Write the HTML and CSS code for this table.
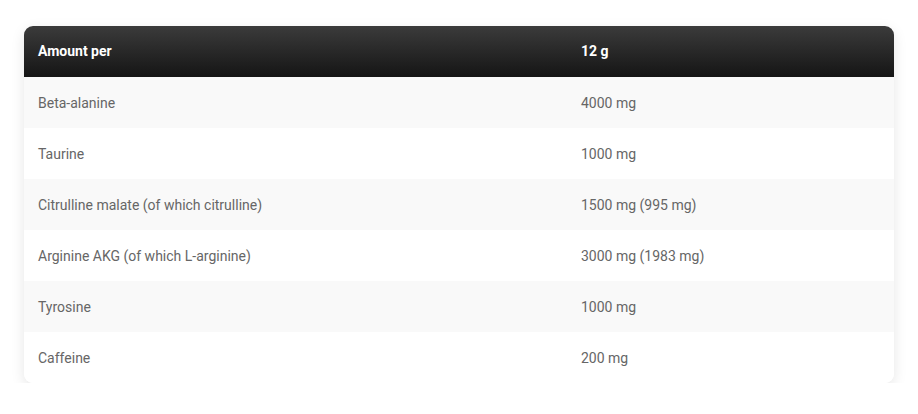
FILE: index.html
```html
<!DOCTYPE html>
<html>
<head>
<meta charset="utf-8">
<link rel="stylesheet" href="styles.css">
</head>
<body>
<div class="card">
  <table class="nutri">
    <thead>
      <tr><th class="c1">Amount per</th><th>12 g</th></tr>
    </thead>
    <tbody>
      <tr><td class="c1">Beta-alanine</td><td>4000 mg</td></tr>
      <tr><td class="c1">Taurine</td><td>1000 mg</td></tr>
      <tr><td class="c1">Citrulline malate (of which citrulline)</td><td>1500 mg (995 mg)</td></tr>
      <tr><td class="c1">Arginine AKG (of which L-arginine)</td><td>3000 mg (1983 mg)</td></tr>
      <tr><td class="c1">Tyrosine</td><td>1000 mg</td></tr>
      <tr><td class="c1">Caffeine</td><td>200 mg</td></tr>
    </tbody>
  </table>
</div>
</body>
</html>
```
FILE: styles.css
```css
html, body { margin: 0; padding: 0; background: #fff; }
body { padding: 26px 24px 0 24px; font-family: Roboto, "Liberation Sans", sans-serif; }
.card {
  width: 870px;
  border-radius: 9px;
  overflow: hidden;
  box-shadow: 0 4px 14px rgba(0,0,0,0.1);
  background: #fff;
}
.nutri { width: 100%; border-collapse: collapse; table-layout: fixed; }
.nutri th, .nutri td {
  height: 51px;
  padding: 0 14px;
  text-align: left;
  vertical-align: middle;
  box-sizing: border-box;
}
.nutri .c1 { width: 543px; }
.nutri thead tr { background: linear-gradient(#3b3b3b, #151515); }
.nutri th { color: #fff; font-weight: 700; font-size: 14px; padding-bottom: 2px; }
.nutri td { color: #666; font-size: 14px; }
.nutri tbody tr:nth-child(odd) { background: #f9f9f9; }
.nutri tbody tr:nth-child(even) { background: #fff; }
```
